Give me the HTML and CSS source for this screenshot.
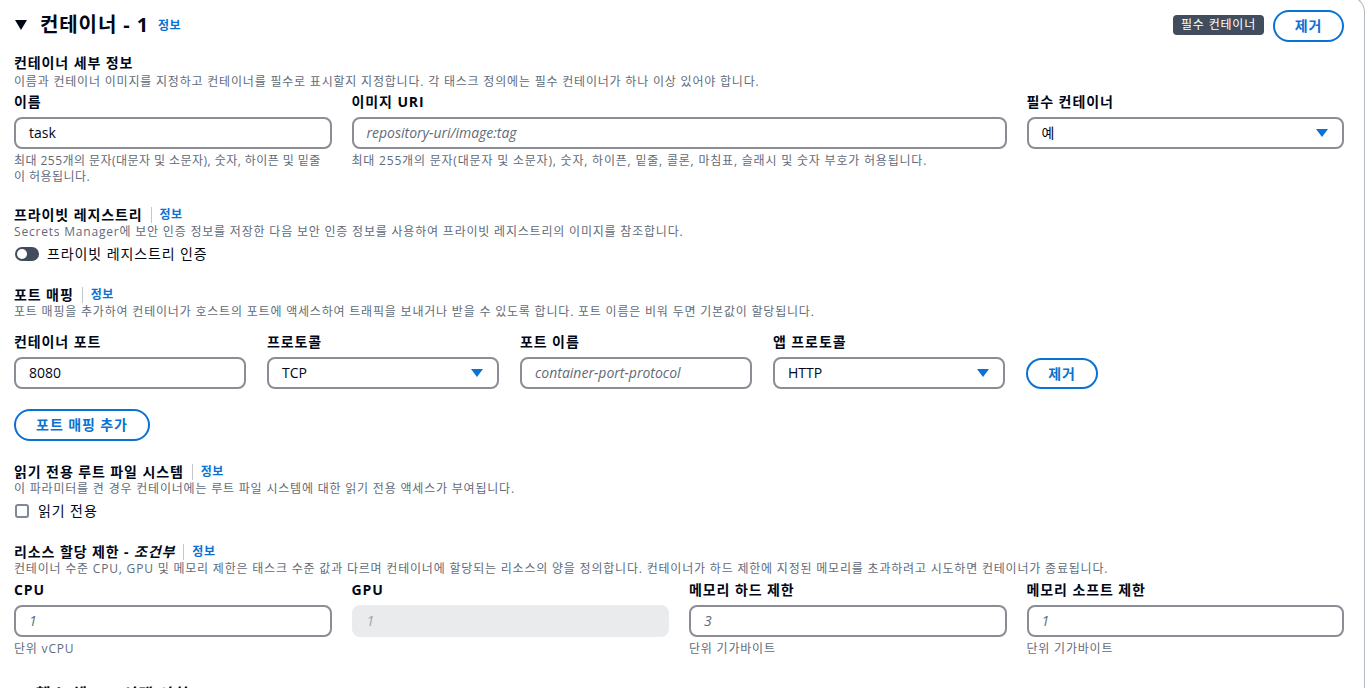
FILE: index.html
```html
<!DOCTYPE html>
<html lang="ko">
<head>
<meta charset="utf-8">
<title>컨테이너 - 1</title>
<link rel="stylesheet" href="styles.css">
</head>
<body>
<div class="card">
  <header class="head">
    <svg class="caret" width="12" height="10" viewBox="0 0 12 10"><polygon points="0,0 12,0 6,10" fill="#000716"/></svg>
    <h2 class="title">컨테이너 - 1</h2>
    <a class="info">정보</a>
    <span class="spacer"></span>
    <span class="badge">필수 컨테이너</span>
    <button class="btn">제거</button>
  </header>

  <section class="sec sec-first">
    <h3 class="sh">컨테이너 세부 정보</h3>
    <p class="desc">이름과 컨테이너 이미지를 지정하고 컨테이너를 필수로 표시할지 지정합니다. 각 태스크 정의에는 필수 컨테이너가 하나 이상 있어야 합니다.</p>
    <div class="grid4">
      <div class="field">
        <label class="lbl">이름</label>
        <div class="input">task</div>
        <p class="hint tight">최대 255개의 문자(대문자 및 소문자), 숫자, 하이픈 및 밑줄이 허용됩니다.</p>
      </div>
      <div class="field span2">
        <label class="lbl">이미지 URI</label>
        <div class="input ph">repository-uri/image:tag</div>
        <p class="hint">최대 255개의 문자(대문자 및 소문자), 숫자, 하이픈, 밑줄, 콜론, 마침표, 슬래시 및 숫자 부호가 허용됩니다.</p>
      </div>
      <div class="field">
        <label class="lbl">필수 컨테이너</label>
        <div class="input select">예<svg class="arrow" width="12" height="8" viewBox="0 0 12 8"><polygon points="0,0 12,0 6,8" fill="#0972d3"/></svg></div>
      </div>
    </div>
  </section>

  <section class="sec sec-priv">
    <div class="hrow"><h3 class="sh">프라이빗 레지스트리</h3><span class="sep"></span><a class="info sm">정보</a></div>
    <p class="desc">Secrets Manager에 보안 인증 정보를 저장한 다음 보안 인증 정보를 사용하여 프라이빗 레지스트리의 이미지를 참조합니다.</p>
    <div class="toggle-row"><span class="toggle"><span class="knob"></span></span><span>프라이빗 레지스트리 인증</span></div>
  </section>

  <section class="sec sec-port">
    <div class="hrow"><h3 class="sh">포트 매핑</h3><span class="sep"></span><a class="info sm">정보</a></div>
    <p class="desc">포트 매핑을 추가하여 컨테이너가 호스트의 포트에 액세스하여 트래픽을 보내거나 받을 수 있도록 합니다. 포트 이름은 비워 두면 기본값이 할당됩니다.</p>
    <div class="port-row">
      <div class="field pf">
        <label class="lbl">컨테이너 포트</label>
        <div class="input">8080</div>
      </div>
      <div class="field pf">
        <label class="lbl">프로토콜</label>
        <div class="input select">TCP<svg class="arrow" width="12" height="8" viewBox="0 0 12 8"><polygon points="0,0 12,0 6,8" fill="#0972d3"/></svg></div>
      </div>
      <div class="field pf">
        <label class="lbl">포트 이름</label>
        <div class="input ph">container-port-protocol</div>
      </div>
      <div class="field pf">
        <label class="lbl">앱 프로토콜</label>
        <div class="input select">HTTP<svg class="arrow" width="12" height="8" viewBox="0 0 12 8"><polygon points="0,0 12,0 6,8" fill="#0972d3"/></svg></div>
      </div>
      <button class="btn btn-rm">제거</button>
    </div>
    <button class="btn btn-add">포트 매핑 추가</button>
  </section>

  <section class="sec sec-ro">
    <div class="hrow"><h3 class="sh">읽기 전용 루트 파일 시스템</h3><span class="sep"></span><a class="info sm">정보</a></div>
    <p class="desc">이 파라미터를 켠 경우 컨테이너에는 루트 파일 시스템에 대한 읽기 전용 액세스가 부여됩니다.</p>
    <div class="check-row"><span class="check"></span><span>읽기 전용</span></div>
  </section>

  <section class="sec sec-res">
    <div class="hrow"><h3 class="sh">리소스 할당 제한 - <i>조건부</i></h3><span class="sep"></span><a class="info sm">정보</a></div>
    <p class="desc">컨테이너 수준 CPU, GPU 및 메모리 제한은 태스크 수준 값과 다르며 컨테이너에 할당되는 리소스의 양을 정의합니다. 컨테이너가 하드 제한에 지정된 메모리를 초과하려고 시도하면 컨테이너가 종료됩니다.</p>
    <div class="grid4">
      <div class="field">
        <label class="lbl">CPU</label>
        <div class="input ph">1</div>
        <p class="hint">단위 vCPU</p>
      </div>
      <div class="field">
        <label class="lbl">GPU</label>
        <div class="input ph disabled">1</div>
      </div>
      <div class="field">
        <label class="lbl">메모리 하드 제한</label>
        <div class="input ph">3</div>
        <p class="hint">단위 기가바이트</p>
      </div>
      <div class="field">
        <label class="lbl">메모리 소프트 제한</label>
        <div class="input ph">1</div>
        <p class="hint">단위 기가바이트</p>
      </div>
    </div>
  </section>

  <section class="sec sec-health">
    <div class="hrow"><svg class="caret2" width="10" height="8" viewBox="0 0 10 8"><polygon points="0,0 10,0 5,8" fill="#000716"/></svg><h3 class="sh big">헬스 체크 - <i>선택 사항</i></h3></div>
  </section>
</div>
</body>
</html>
```

FILE: styles.css
```css
* { box-sizing: border-box; }
html, body {
  margin: 0;
  padding: 0;
  background: #ffffff;
  overflow: hidden;
}
body {
  font-family: "Open Sans", "Noto Sans CJK KR", sans-serif;
  color: #000716;
  font-size: 14px;
  line-height: 18px;
}
.card {
  margin: -4px 1px 0 0;
  border: 1px solid #b4bac3;
  border-left: none;
  border-bottom: none;
  border-top-right-radius: 16px;
  padding: 0 20px 0 14px;
  height: 720px;
}
.head {
  display: flex;
  align-items: center;
  height: 33px;
  margin-top: 11px;
}
.caret { margin: 0 13px 0 1px; }
.title {
  margin: 0;
  font-size: 20px;
  line-height: 24px;
  font-weight: 700;
  letter-spacing: 0.9px;
}
.info {
  color: #0972d3;
  font-weight: 700;
  font-size: 12px;
  line-height: 16px;
  margin-left: 9px;
  margin-top: 3px;
  letter-spacing: 0.5px;
}
.spacer { flex: 1; }
.badge {
  background: #414d5c;
  color: #ffffff;
  font-size: 12px;
  line-height: 20px;
  padding: 0 8px;
  border-radius: 4px;
  margin-right: 9px;
  letter-spacing: 0.8px;
}
.btn {
  font-family: inherit;
  background: #ffffff;
  border: 2px solid #0972d3;
  color: #0972d3;
  border-radius: 20px;
  font-weight: 700;
  font-size: 14px;
  line-height: 18px;
  height: 32px;
  padding: 0 20px;
  cursor: pointer;
  letter-spacing: 0.9px;
}
.head .btn { width: 71px; padding: 0; margin-top: 2px; }
.sec { display: block; }
.sec-first { margin-top: 13px; }
.sh {
  margin: 0;
  font-size: 14px;
  line-height: 18px;
  font-weight: 700;
  letter-spacing: 0.9px;
}
.sh i { font-weight: 700; }
.desc {
  margin: 0;
  font-size: 12px;
  line-height: 16px;
  color: #5f6b7a;
  letter-spacing: 0.8px;
}
.sec-first .desc { margin-top: 2px; }
.hrow {
  display: flex;
  align-items: center;
  height: 18px;
}
.sep {
  width: 1px;
  height: 16px;
  background: #c6c6cd;
  margin: 0 8px 0 8px;
}
.info.sm { margin: 0; }
.grid4 {
  display: grid;
  grid-template-columns: repeat(4, 1fr);
  column-gap: 20px;
  margin-top: 3px;
}
.span2 { grid-column: span 2; }
.field { display: flex; flex-direction: column; min-width: 0; }
.lbl {
  font-weight: 700;
  font-size: 14px;
  line-height: 18px;
  display: block;
  letter-spacing: 0.9px;
}
.input {
  margin-top: 6px;
  height: 32px;
  border: 2px solid #8c8c94;
  border-radius: 8px;
  padding: 0 13px;
  display: flex;
  align-items: center;
  font-size: 14px;
  white-space: nowrap;
  overflow: hidden;
}
.ph {
  color: #5f6b7a;
  font-style: italic;
}
.disabled {
  background: #e9ebed;
  border-color: #e9ebed;
  color: #9ba7b6;
}
.select { justify-content: space-between; padding-right: 14px; }
.arrow { flex: none; }
.hint {
  margin: 4px 0 0;
  font-size: 12px;
  line-height: 16px;
  color: #5f6b7a;
  letter-spacing: 0.8px;
}
.hint.tight { letter-spacing: 0.45px; }
.sec-priv { margin-top: 21px; }
.toggle-row, .check-row {
  display: flex;
  align-items: center;
  height: 18px;
  margin-top: 5px;
  font-size: 14px;
  letter-spacing: 0.9px;
}
.toggle {
  width: 24px;
  height: 14px;
  border-radius: 8px;
  background: #414d5c;
  margin: 0 8px 0 1px;
  position: relative;
  flex: none;
}
.knob {
  position: absolute;
  left: 2px;
  top: 2px;
  width: 10px;
  height: 10px;
  border-radius: 50%;
  background: #ffffff;
}
.sec-port { margin-top: 23px; }
.port-row {
  display: flex;
  align-items: flex-end;
  gap: 21px;
  margin-top: 13px;
}
.pf { width: 232px; flex: none; }
.btn-rm { width: 72px; padding: 0; height: 31px; }
.btn-add { margin-top: 20px; width: 136px; padding: 0; }
.sec-ro { margin-top: 22px; }
.check {
  width: 14px;
  height: 14px;
  border: 2px solid #7d8998;
  border-radius: 3px;
  margin: 0 9px 0 1px;
  flex: none;
}
.sec-res { margin-top: 23px; }
.sec-res .grid4 { margin-top: 4px; }
.sec-health { margin-top: 28px; }
.caret2 { margin: 0 8px 0 4px; }
.sh.big { font-size: 16px; line-height: 20px; }
```
